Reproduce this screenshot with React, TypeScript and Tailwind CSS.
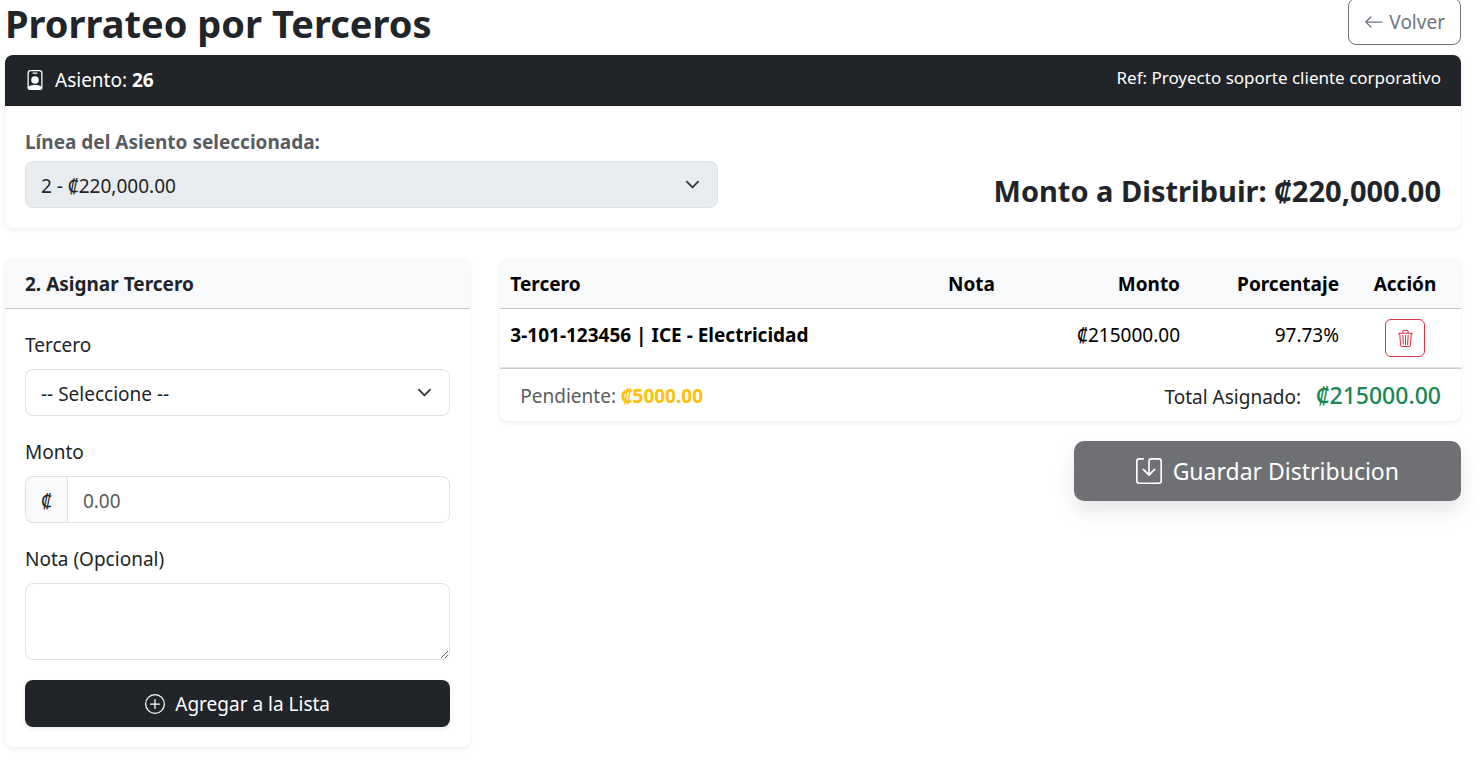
import { BsArrowLeft, BsPersonBadge, BsPlusCircle, BsSave, BsTrash3 } from "react-icons/bs";

function Chevron() {
  return (
    <svg viewBox="0 0 16 16" className="pointer-events-none absolute right-[18px] top-[16px] h-[15px] w-[15px]" aria-hidden="true">
      <path d="m2 5 6 6 6-6" fill="none" stroke="#343a40" strokeWidth="2" strokeLinecap="round" strokeLinejoin="round" />
    </svg>
  )
}

export default function App() {
  return (
    <div className="min-h-screen bg-white pl-[5px] pr-5 font-['Noto_Sans',sans-serif] text-[19px] leading-[30px] text-[#212529]">

      {/* Encabezado */}
      <div className="-mt-0.5 mb-[10px] flex items-end justify-between">
        <h1 className="text-[38px] font-bold leading-[44px]">Prorrateo por Terceros</h1>
        <a href="#" className="flex h-[47px] items-center gap-[5px] rounded-lg border border-[#6c757d] px-[15px] text-[#6c757d]">
          <BsArrowLeft className="h-5 w-5" />
          Volver
        </a>
      </div>

      {/* Asiento */}
      <div className="mb-[30px] rounded-lg bg-white shadow-[0_2px_5px_rgba(0,0,0,0.075)]">
        <div className="flex items-center justify-between rounded-t-lg border-b border-[#1a1e21] bg-[#212529] px-5 py-[10px] text-white">
          <span className="flex items-center gap-[10px]">
            <BsPersonBadge className="h-5 w-5" />
            <span>Asiento: <strong>26</strong></span>
          </span>
          <span className="mb-[5px] text-[17px] leading-[25px]">Ref: Proyecto soporte cliente corporativo</span>
        </div>
        <div className="grid grid-cols-2 items-end gap-[30px] p-5">
          <div>
            <label htmlFor="linea" className="mb-[3px] block font-bold leading-[32px] text-[#595c5f]">Línea del Asiento seleccionada:</label>
            <div className="relative">
              <select id="linea" disabled className="block h-[47px] w-full appearance-none rounded-lg border border-[#dee2e6] bg-[#e9ecef] px-[15px] pt-0.5 opacity-100">
                <option>2 - ₡220,000.00</option>
              </select>
              <Chevron />
            </div>
          </div>
          <h3 className="text-right text-[29px] font-bold leading-[34px]">Monto a Distribuir: ₡220,000.00</h3>
        </div>
      </div>

      <div className="grid grid-cols-3 items-start gap-[30px]">

        {/* Formulario */}
        <div className="rounded-lg bg-white shadow-[0_2px_5px_rgba(0,0,0,0.075)]">
          <div className="rounded-t-lg border-b border-[#c9ccd0] bg-[#f8f9fa] px-5 pb-[9px] pt-[11px] font-bold">2. Asignar Tercero</div>
          <form className="p-5">
            <label htmlFor="tercero" className="mb-2 block leading-[32px]">Tercero</label>
            <div className="relative mb-5">
              <select id="tercero" className="block h-[47px] w-full appearance-none rounded-lg border border-[#dee2e6] bg-white px-[15px] pt-0.5">
                <option>-- Seleccione --</option>
              </select>
              <Chevron />
            </div>

            <label htmlFor="monto" className="mb-2 block leading-[32px]">Monto</label>
            <div className="mb-5 flex h-[47px]">
              <span className="flex items-center rounded-l-lg border border-r-0 border-[#dee2e6] bg-[#f8f9fa] px-[15px] pt-0.5">₡</span>
              <input id="monto" type="text" placeholder="0.00" className="w-full min-w-0 flex-1 rounded-r-lg border border-[#dee2e6] px-[15px] pt-0.5 placeholder:text-[#595c5f]" />
            </div>

            <label htmlFor="nota" className="mb-2 block leading-[32px]">Nota (Opcional)</label>
            <textarea id="nota" rows={2} className="mb-5 block h-[77px] w-full resize-y rounded-lg border border-[#dee2e6] px-[15px] py-2" />

            <button type="button" className="flex h-[47px] w-full items-center justify-center gap-[10px] rounded-lg bg-[#212529] text-white shadow-[0_2px_5px_rgba(0,0,0,0.075)]">
              <BsPlusCircle className="h-5 w-5" />
              Agregar a la Lista
            </button>
          </form>
        </div>

        {/* Distribucion */}
        <div className="col-span-2">
          <div className="mb-5 overflow-hidden rounded-lg bg-white shadow-[0_2px_5px_rgba(0,0,0,0.075)]">
            <table className="w-full table-fixed text-black">
              <thead>
                <tr className="border-b border-[#c6c7c8] bg-[#f8f9fa]">
                  <th className="px-[10px] pb-[9px] pt-[11px] text-left">Tercero</th>
                  <th className="w-[120px] px-[10px] pb-[9px] pt-[11px] text-left">Nota</th>
                  <th className="w-[132px] px-[10px] pb-[9px] pt-[11px] text-right">Monto</th>
                  <th className="w-[159px] px-[10px] pb-[9px] pt-[11px] text-right">Porcentaje</th>
                  <th className="w-[112px] px-[10px] pb-[9px] pt-[11px] text-center">Acción</th>
                </tr>
              </thead>
              <tbody>
                <tr className="border-b border-[#dee2e6] align-top">
                  <td className="px-[10px] pb-[9px] pt-[11px] font-bold">3-101-123456 | ICE - Electricidad</td>
                  <td className="px-[10px] pb-[9px] pt-[11px]"></td>
                  <td className="px-[10px] pb-[9px] pt-[11px] text-right">₡215000.00</td>
                  <td className="px-[10px] pb-[9px] pt-[11px] text-right">97.73%</td>
                  <td className="p-[10px]">
                    <button type="button" aria-label="Eliminar" className="mx-auto flex h-[38px] w-10 items-center justify-center rounded-md border border-[#dc3545] text-[#dc3545]">
                      <BsTrash3 className="h-[17px] w-[17px]" />
                    </button>
                  </td>
                </tr>
              </tbody>
            </table>
            <div className="flex items-center justify-between border-t border-[#c9ccd0] px-5 pb-[9px] pt-[11px]">
              <span className="text-[#595c5f]">Pendiente: <strong className="text-[#ffc107]">₡5000.00</strong></span>
              <span className="flex items-baseline gap-[15px]">
                Total Asignado:
                <span className="text-[23px] font-medium text-[#198754]">₡215000.00</span>
              </span>
            </div>
          </div>
          <div className="flex justify-end">
            <button type="button" disabled className="flex h-[60px] items-center gap-[11px] rounded-[10px] bg-[#212529] px-[62px] text-[23px] text-white opacity-65 shadow-[0_10px_20px_rgba(0,0,0,0.15)]">
              <BsSave className="h-[26px] w-[26px]" />
              Guardar Distribucion
            </button>
          </div>
        </div>
      </div>
    </div>
  )
}
